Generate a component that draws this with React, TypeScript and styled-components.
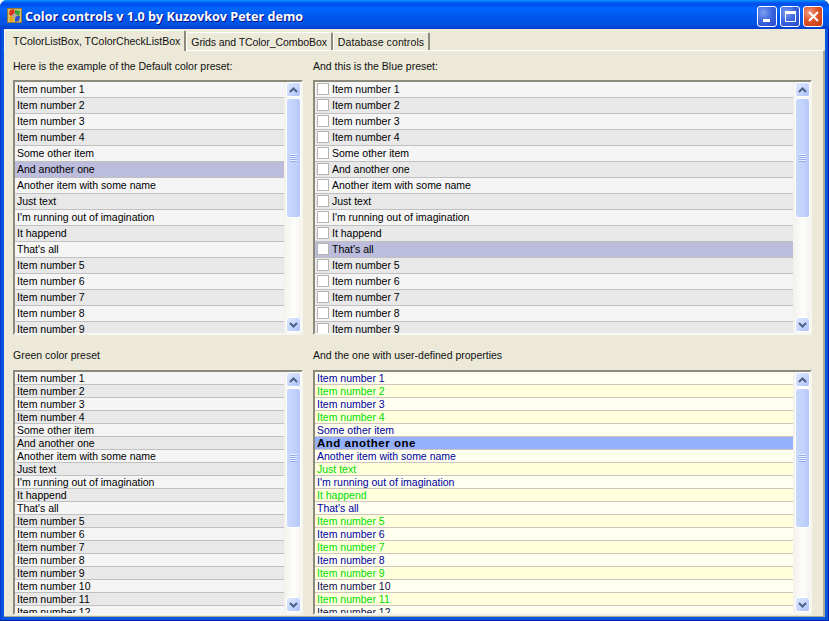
import React from "react";
import styled, { createGlobalStyle } from "styled-components";

const Global = createGlobalStyle`
  html, body { margin: 0; padding: 0; background: #fff; }
  #root { width: 829px; height: 621px; overflow: hidden; }
`;

const Window = styled.div`
  width: 829px;
  height: 621px;
  box-sizing: border-box;
  display: flex;
  flex-direction: column;
  border-radius: 7px 7px 0 0;
  padding: 0 4px 4px;
  background: linear-gradient(90deg, #0831d9 0, #0855dd 2px, #0855dd 100%);
  box-shadow: inset 0 -1px 0 #001ea0, inset -1px 0 0 #001ea0;
  font-family: "Liberation Sans", Arial, sans-serif;
  font-size: 10.5px;
  color: #000;
  overflow: hidden;
`;

const TitleBar = styled.div`
  height: 29px;
  flex: none;
  margin: 0 -4px;
  padding: 0 6px 0 7px;
  display: flex;
  align-items: flex-start;
  gap: 3px;
  background: linear-gradient(180deg, #0997ff 0, #0053ee 3px, #0050ee 5px, #0066ff 9px, #0055ea 18px, #0054e3 24px, #0046d5 27px, #003dd7 29px);
`;

const AppIcon = styled.svg`
  width: 15px;
  height: 15px;
  flex: none;
  margin-top: 8px;
`;

const Title = styled.div`
  flex: 1;
  color: #fff;
  font-family: "Open Sans", sans-serif;
  font-weight: 700;
  font-size: 12.6px;
  line-height: 18px;
  margin-top: 8px;
  text-shadow: 1px 1px 0 #0f1089;
  white-space: nowrap;
`;

const CapButton = styled.div<{ $close?: boolean }>`
  width: 20px;
  height: 21px;
  box-sizing: border-box;
  border: 1px solid #fff;
  border-radius: 3px;
  margin-top: 6px;
  display: flex;
  align-items: center;
  justify-content: center;
  background: ${p => p.$close
    ? "radial-gradient(circle at 30% 30%, #f0a080 0, #e0542c 45%, #c63a12 100%)"
    : "radial-gradient(circle at 30% 30%, #7c9df0 0, #3a64e0 50%, #2446c8 100%)"};
`;

const CapIcon = styled.svg`
  width: 15px;
  height: 15px;
`;

const Client = styled.div`
  flex: 1;
  min-height: 0;
  background: #ece9d8;
  display: flex;
  flex-direction: column;
`;

const TabStrip = styled.div`
  height: 21px;
  flex: none;
  display: flex;
  align-items: flex-end;
  position: relative;
  z-index: 1;
`;

const Tab = styled.div<{ $active?: boolean; $wide?: number }>`
  box-sizing: border-box;
  height: ${p => (p.$active ? 21 : 18)}px;
  margin-bottom: ${p => (p.$active ? -1 : 0)}px;
  padding: ${p => (p.$active ? "0 4px 0 8px" : "0 4px")};
  display: flex;
  align-items: center;
  white-space: nowrap;
  background: #ece9d8;
  border-top: 1px solid #fff;
  border-left: 1px solid #fff;
  border-right: 2px solid #8c8a7a;
  border-radius: 2px 2px 0 0;
  font-size: 10.5px;
  color: #111;
  letter-spacing: ${p => p.$wide ?? 0}px;
`;

const Page = styled.div`
  flex: 1;
  min-height: 0;
  box-sizing: border-box;
  border-top: 1px solid #fff;
  border-right: 2px solid #aca899;
  border-bottom: 1px solid #aca899;
  padding: 9px 0 0 9px;
  display: grid;
  grid-template-columns: 290px 499px;
  grid-template-rows: 20px 255px 35px 245px;
  column-gap: 10px;
`;

const Label = styled.div<{ $low?: boolean }>`
  align-self: ${p => (p.$low ? "end" : "start")};
  padding-bottom: ${p => (p.$low ? 8 : 0)}px;
  line-height: 13px;
  font-size: 10.5px;
  color: #111;
`;

const ListBox = styled.div`
  box-sizing: border-box;
  display: flex;
  border-top: 2px solid #8c8a7a;
  border-left: 2px solid #8c8a7a;
  border-right: 2px solid #f7f6f0;
  border-bottom: 2px solid #f7f6f0;
  background: #fff;
  overflow: hidden;
`;

const Rows = styled.div`
  flex: 1;
  min-width: 0;
  overflow: hidden;
`;

const Row = styled.div<{ $h: number; $bg: string; $line: string; $fg: string; $bold?: boolean }>`
  box-sizing: border-box;
  height: ${p => p.$h}px;
  display: flex;
  align-items: center;
  gap: 3px;
  padding-left: 2px;
  padding-bottom: ${p => (p.$h === 16 ? 2 : 0)}px;
  background: ${p => p.$bg};
  border-bottom: 1px solid ${p => p.$line};
  color: ${p => p.$fg};
  font-weight: ${p => (p.$bold ? 700 : 400)};
  font-size: ${p => (p.$bold ? 11.5 : 10.5)}px;
  letter-spacing: ${p => (p.$bold ? 0.5 : 0)}px;
  white-space: nowrap;
`;

const Check = styled.span`
  width: 12px;
  height: 12px;
  box-sizing: border-box;
  border: 1px solid #b5b5ae;
  background: #fff;
  flex: none;
`;

const ScrollBar = styled.div`
  width: 17px;
  flex: none;
  display: flex;
  flex-direction: column;
  padding-bottom: 1px;
  box-sizing: border-box;
  background: linear-gradient(90deg, #f3f1ec 0, #fdfdfa 60%, #f4f2ee 100%);
`;

const ArrowButton = styled.div`
  height: 15px;
  flex: none;
  margin-left: 2px;
  box-sizing: border-box;
  border: 1px solid #fff;
  border-radius: 3px;
  background: linear-gradient(135deg, #e1eafe 0, #c3d3fd 60%, #a9bff5 100%);
  display: flex;
  align-items: center;
  justify-content: center;
`;

const ArrowIcon = styled.svg`
  width: 9px;
  height: 6px;
`;

const Thumb = styled.div<{ $h: number }>`
  height: ${p => p.$h}px;
  flex: none;
  box-sizing: border-box;
  margin: 1px 0 0 2px;
  border: 1px solid #fff;
  border-radius: 3px;
  background: linear-gradient(90deg, #c9d8fc 0, #c0d1fb 60%, #b4c8f8 100%);
  display: flex;
  align-items: center;
  justify-content: center;
`;

const Grip = styled.svg`
  width: 7px;
  height: 8px;
`;

const Spacer = styled.div`
  flex: 1;
`;

const base = [
  "Item number 1", "Item number 2", "Item number 3", "Item number 4",
  "Some other item", "And another one", "Another item with some name", "Just text",
  "I'm running out of imagination", "It happend", "That's all",
  "Item number 5", "Item number 6", "Item number 7", "Item number 8", "Item number 9",
  "Item number 10", "Item number 11", "Item number 12",
];

const Scroll = ({ thumb }: { thumb: number }) => (
  <ScrollBar>
    <ArrowButton>
      <ArrowIcon viewBox="0 0 9 6"><path d="M1 5l3.5-3.5L8 5" fill="none" stroke="#4d6185" strokeWidth="2" /></ArrowIcon>
    </ArrowButton>
    <Thumb $h={thumb}>
      <Grip viewBox="0 0 7 8"><path d="M0 .5h7M0 2.5h7M0 4.5h7M0 6.5h7" stroke="#eef4fe" /><path d="M0 1.5h7M0 3.5h7M0 5.5h7M0 7.5h7" stroke="#8faaf0" /></Grip>
    </Thumb>
    <Spacer />
    <ArrowButton>
      <ArrowIcon viewBox="0 0 9 6"><path d="M1 1l3.5 3.5L8 1" fill="none" stroke="#4d6185" strokeWidth="2" /></ArrowIcon>
    </ArrowButton>
  </ScrollBar>
);

const GrayList = ({ h, count, selected, check, thumb }: { h: number; count: number; selected: number; check?: boolean; thumb: number }) => (
  <ListBox>
    <Rows>
      {base.slice(0, count).map((t, i) => (
        <Row key={i} $h={h} $fg="#000" $line="#c0c0c0"
          $bg={i === selected ? "#bcbcdc" : i % 2 ? "#e8e8e8" : "#f5f5f5"}>
          {check && <Check />}
          {t}
        </Row>
      ))}
    </Rows>
    <Scroll thumb={thumb} />
  </ListBox>
);

const greens = new Set([1, 3, 7, 9, 11, 13, 15, 17]);

const CustomList = () => (
  <ListBox>
    <Rows>
      {base.map((t, i) => (
        <Row key={i} $h={13} $line="#cfc4c0" $bold={i === 5}
          $fg={i === 5 ? "#000" : greens.has(i) ? "#00dd00" : i >= 16 ? "#101050" : "#0000a0"}
          $bg={i === 5 ? "#94b0ff" : i % 2 ? "#ffffdc" : "#fffff0"}>
          {t}
        </Row>
      ))}
    </Rows>
    <Scroll thumb={140} />
  </ListBox>
);

export default function App() {
  return (
    <>
      <Global />
      <Window>
        <TitleBar>
          <AppIcon viewBox="0 0 15 15">
            <rect x="0" y="0" width="15" height="15" fill="#8a7a40" />
            <rect x="1" y="1" width="13" height="13" fill="#d8c060" />
            <path d="M3 2l4-1 1 5-4 2-2-2z" fill="#e03020" />
            <path d="M8 2l5 1-1 5-4-2z" fill="#30a040" />
            <path d="M2 9l4-1 1 5-4 1z" fill="#e8a020" />
            <path d="M8 8l5 0-1 5-4 1z" fill="#3050d0" />
            <circle cx="7.5" cy="7.5" r="2.2" fill="#a8a8a8" />
          </AppIcon>
          <Title>Color controls v 1.0 by Kuzovkov Peter demo</Title>
          <CapButton>
            <CapIcon viewBox="0 0 15 15"><rect x="3" y="10" width="7" height="3" fill="#fff" /></CapIcon>
          </CapButton>
          <CapButton>
            <CapIcon viewBox="0 0 15 15"><path d="M2.5 4.5h10v8h-10z" fill="none" stroke="#fff" /><rect x="2" y="2" width="11" height="2.5" fill="#fff" /></CapIcon>
          </CapButton>
          <CapButton $close>
            <CapIcon viewBox="0 0 15 15"><path d="M3 3l9 9M12 3l-9 9" stroke="#fff" strokeWidth="2" /></CapIcon>
          </CapButton>
        </TitleBar>
        <Client>
          <TabStrip>
            <Tab $active>TColorListBox, TColorCheckListBox</Tab>
            <Tab $wide={-0.08}>Grids and TColor_ComboBox</Tab>
            <Tab $wide={0.1}>Database controls</Tab>
          </TabStrip>
          <Page>
            <Label>Here is the example of the Default color preset:</Label>
            <Label>And this is the Blue preset:</Label>
            <GrayList h={16} count={16} selected={5} thumb={120} />
            <GrayList h={16} count={16} selected={10} check thumb={120} />
            <Label $low>Green color preset</Label>
            <Label $low>And the one with user-defined properties</Label>
            <GrayList h={13} count={19} selected={-1} thumb={140} />
            <CustomList />
          </Page>
        </Client>
      </Window>
    </>
  );
}
